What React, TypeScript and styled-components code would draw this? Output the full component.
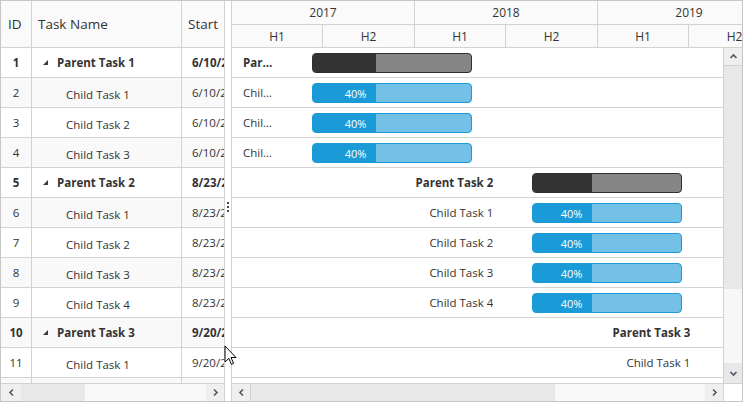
import React from 'react';
import styled, { createGlobalStyle } from 'styled-components';

const GlobalStyle = createGlobalStyle`
  html, body { margin: 0; padding: 0; background: #ffffff; }
  body { font-family: "Open Sans", "Noto Sans", sans-serif; color: #333333; }
`;

const LINE = '#d2d2d2';
const PX_PER_YEAR = 183;
const PX_PER_DAY = PX_PER_YEAR / 365;
const ORIGIN = Date.UTC(2017, 0, 1);
const dayOf = (y: number, m: number, d: number) => (Date.UTC(y, m - 1, d) - ORIGIN) / 86400000;

type Group = { start: string; day: number; duration: number };
type Task = { id: number; name: string; parent: boolean; group: Group; progress: number };

const G1: Group = { start: '6/10/2017', day: dayOf(2017, 6, 10), duration: 319 };
const G2: Group = { start: '8/23/2018', day: dayOf(2018, 8, 23), duration: 299 };
const G3: Group = { start: '9/20/2019', day: dayOf(2019, 9, 20), duration: 300 };

const tasks: Task[] = [
  { id: 1, name: 'Parent Task 1', parent: true, group: G1, progress: 40 },
  { id: 2, name: 'Child Task 1', parent: false, group: G1, progress: 40 },
  { id: 3, name: 'Child Task 2', parent: false, group: G1, progress: 40 },
  { id: 4, name: 'Child Task 3', parent: false, group: G1, progress: 40 },
  { id: 5, name: 'Parent Task 2', parent: true, group: G2, progress: 40 },
  { id: 6, name: 'Child Task 1', parent: false, group: G2, progress: 40 },
  { id: 7, name: 'Child Task 2', parent: false, group: G2, progress: 40 },
  { id: 8, name: 'Child Task 3', parent: false, group: G2, progress: 40 },
  { id: 9, name: 'Child Task 4', parent: false, group: G2, progress: 40 },
  { id: 10, name: 'Parent Task 3', parent: true, group: G3, progress: 40 },
  { id: 11, name: 'Child Task 1', parent: false, group: G3, progress: 40 },
  { id: 12, name: 'Child Task 2', parent: false, group: G3, progress: 40 },
];

const Frame = styled.div`
  position: relative;
  width: 743px;
  height: 402px;
  box-sizing: border-box;
  border: 1px solid #c6c6c6;
  display: flex;
  overflow: hidden;
  background: #ffffff;
`;

const GridPane = styled.div`
  flex: 0 0 223px;
  display: flex;
  flex-direction: column;
  overflow: hidden;
`;

const GridHeader = styled.div`
  display: grid;
  grid-template-columns: 31px 150px 100px;
  height: 47px;
  flex: 0 0 47px;
  box-sizing: border-box;
  border-bottom: 1px solid ${LINE};
  background: #fafafa;
`;

const HeaderCell = styled.div<{ $pad: number }>`
  box-sizing: border-box;
  border-right: 1px solid ${LINE};
  display: flex;
  align-items: center;
  padding-left: ${(p) => p.$pad}px;
  font-size: 13.5px;
  color: #333333;
  white-space: nowrap;
  overflow: hidden;
`;

const GridBody = styled.div`
  flex: 1;
  overflow: hidden;
`;

const GridRow = styled.div<{ $alt: boolean }>`
  display: grid;
  grid-template-columns: 31px 150px 100px;
  height: 30px;
  box-sizing: border-box;
  border-bottom: 1px solid ${LINE};
  background: ${(p) => (p.$alt ? '#f9f9f9' : '#ffffff')};
`;

const Cell = styled.div<{ $bold: boolean; $pad?: number; $center?: boolean; $shift?: number }>`
  box-sizing: border-box;
  border-right: 1px solid ${LINE};
  display: flex;
  align-items: center;
  justify-content: ${(p) => (p.$center ? 'center' : 'flex-start')};
  padding-left: ${(p) => p.$pad ?? 0}px;
  padding-top: ${(p) => p.$shift ?? 0}px;
  font-size: 11.5px;
  font-weight: ${(p) => (p.$bold ? 700 : 400)};
  color: #333333;
  white-space: nowrap;
  overflow: hidden;
`;

const Toggle = styled.svg`
  width: 5px;
  height: 5px;
  margin-right: 9px;
  flex: 0 0 auto;
`;

const HScroll = styled.div`
  flex: 0 0 18px;
  height: 18px;
  box-sizing: border-box;
  border-top: 1px solid ${LINE};
  display: flex;
`;

const ScrollBtn = styled.div<{ $w: number; $edge?: 'left' | 'right' }>`
  flex: 0 0 ${(p) => p.$w}px;
  display: flex;
  align-items: center;
  justify-content: center;
  background: #efefef;
  box-sizing: border-box;
  ${(p) => (p.$edge === 'left' ? `border-left: 1px solid ${LINE};` : '')}
  ${(p) => (p.$edge === 'right' ? `border-right: 1px solid ${LINE};` : '')}
`;

const Thumb = styled.div<{ $w: number }>`
  flex: 0 0 ${(p) => p.$w}px;
  background: #e8e8e8;
`;

const Track = styled.div`
  flex: 1;
  background: #f8f8f8;
`;

const Splitter = styled.div`
  flex: 0 0 8px;
  box-sizing: border-box;
  border-left: 1px solid ${LINE};
  border-right: 1px solid ${LINE};
  display: flex;
  flex-direction: column;
  align-items: center;
  gap: 2px;
  padding-top: 201px;
  background: #ffffff;
`;

const Grip = styled.span`
  width: 2px;
  height: 2px;
  background: #3c4a5b;
`;

const ChartPane = styled.div`
  flex: 1;
  display: flex;
  flex-direction: column;
  overflow: hidden;
`;

const TimelineHeader = styled.div`
  flex: 0 0 47px;
  display: flex;
  flex-direction: column;
  background: #fafafa;
  overflow: hidden;
`;

const TierRow = styled.div<{ $h: number }>`
  flex: 0 0 ${(p) => p.$h}px;
  display: flex;
  box-sizing: border-box;
  border-bottom: 1px solid ${LINE};
`;

const TierCell = styled.div<{ $w: number }>`
  flex: 0 0 ${(p) => p.$w}px;
  box-sizing: border-box;
  border-right: 1px solid ${LINE};
  display: flex;
  align-items: center;
  justify-content: center;
  font-size: 12px;
  color: #333333;
`;

const ChartBody = styled.div`
  flex: 1;
  display: flex;
  overflow: hidden;
`;

const ChartRows = styled.div`
  flex: 1;
  overflow: hidden;
`;

const ChartRow = styled.div`
  position: relative;
  height: 30px;
  box-sizing: border-box;
  border-bottom: 1px solid ${LINE};
`;

const TaskLabel = styled.div<{ $bold: boolean }>`
  position: absolute;
  top: 0;
  left: 11px;
  height: 29px;
  display: flex;
  align-items: center;
  justify-content: flex-end;
  font-size: 11.5px;
  font-weight: ${(p) => (p.$bold ? 700 : 400)};
  color: #333333;
  white-space: nowrap;
  overflow: hidden;
  span {
    overflow: hidden;
    text-overflow: ellipsis;
  }
`;

const Bar = styled.div<{ $parent: boolean }>`
  position: absolute;
  top: 5px;
  height: 20px;
  box-sizing: border-box;
  border: 1px solid ${(p) => (p.$parent ? '#2f2f2f' : '#1a9ad6')};
  border-radius: 4px;
  background: ${(p) => (p.$parent ? '#868686' : '#74c1e7')};
  overflow: hidden;
  display: flex;
`;

const Progress = styled.div<{ $parent: boolean }>`
  height: 100%;
  box-sizing: border-box;
  background: ${(p) => (p.$parent ? '#333333' : '#1a9ad6')};
  display: flex;
  align-items: center;
  justify-content: flex-end;
  padding-right: 10px;
  color: #ffffff;
  font-size: 11px;
  white-space: nowrap;
`;

const VScroll = styled.div`
  flex: 0 0 19px;
  box-sizing: border-box;
  border-left: 1px solid ${LINE};
  display: flex;
  flex-direction: column;
`;

const VBtn = styled.div<{ $h: number; $line?: boolean; $bg: string }>`
  flex: 0 0 ${(p) => p.$h}px;
  display: flex;
  align-items: center;
  justify-content: center;
  background: ${(p) => p.$bg};
  box-sizing: border-box;
  ${(p) => (p.$line ? `border-bottom: 1px solid ${LINE};` : '')}
`;

const VThumb = styled.div`
  flex: 0 0 223px;
  background: #e8e8e8;
`;

const VTrack = styled.div`
  flex: 1;
  background: #f7f7f7;
`;

const Corner = styled.div`
  flex: 0 0 19px;
  box-sizing: border-box;
  border-left: 1px solid ${LINE};
  background: #ffffff;
`;

const ChartScroll = styled.div`
  flex: 1;
  display: flex;
`;

const Cursor = styled.svg`
  position: absolute;
  left: 223px;
  top: 344px;
  width: 13px;
  height: 21px;
  pointer-events: none;
`;

const Chevron: React.FC<{ dir: 'left' | 'right' | 'up' | 'down' }> = ({ dir }) => {
  const rot = { up: 0, right: 90, down: 180, left: 270 }[dir];
  return (
    <svg width="9" height="9" viewBox="0 0 9 9" style={{ transform: `rotate(${rot}deg)` }}>
      <polyline points="1.5,6 4.5,3 7.5,6" fill="none" stroke="#4a5869" strokeWidth="1.6" />
    </svg>
  );
};

const years = ['2017', '2018', '2019'];
const halves = ['H1', 'H2', 'H1', 'H2', 'H1', 'H2'];

export default function App() {
  return (
    <>
      <GlobalStyle />
      <Frame>
        <GridPane>
          <GridHeader>
            <HeaderCell $pad={7}>ID</HeaderCell>
            <HeaderCell $pad={6}>Task Name</HeaderCell>
            <HeaderCell $pad={6}>Start</HeaderCell>
          </GridHeader>
          <GridBody>
            {tasks.map((t) => (
              <GridRow key={t.id} $alt={t.id % 2 === 0}>
                <Cell $bold={t.parent} $center>
                  {t.id}
                </Cell>
                <Cell $bold={t.parent} $pad={t.parent ? 11 : 34} $shift={t.parent ? 0 : 3}>
                  {t.parent && (
                    <Toggle viewBox="0 0 5 5">
                      <polygon points="5,0 5,5 0,5" fill="#3a3a3a" />
                    </Toggle>
                  )}
                  {t.name}
                </Cell>
                <Cell $bold={t.parent} $pad={10}>
                  {t.group.start}
                </Cell>
              </GridRow>
            ))}
          </GridBody>
          <HScroll>
            <ScrollBtn $w={20}>
              <Chevron dir="left" />
            </ScrollBtn>
            <Thumb $w={64} />
            <Track />
            <ScrollBtn $w={18}>
              <Chevron dir="right" />
            </ScrollBtn>
          </HScroll>
        </GridPane>
        <Splitter>
          <Grip />
          <Grip />
          <Grip />
        </Splitter>
        <ChartPane>
          <TimelineHeader>
            <TierRow $h={24}>
              {years.map((y) => (
                <TierCell key={y} $w={183}>
                  {y}
                </TierCell>
              ))}
            </TierRow>
            <TierRow $h={23}>
              {halves.map((h, i) => (
                <TierCell key={i} $w={i % 2 === 0 ? 91 : 92}>
                  {h}
                </TierCell>
              ))}
            </TierRow>
          </TimelineHeader>
          <ChartBody>
            <ChartRows>
              {tasks.map((t) => {
                const left = t.group.day * PX_PER_DAY;
                const width = t.group.duration * PX_PER_DAY;
                const labelWidth = left - 41 - 11 + 2;
                return (
                  <ChartRow key={t.id}>
                    <TaskLabel $bold={t.parent} style={{ width: labelWidth }}>
                      <span>{t.name}</span>
                    </TaskLabel>
                    <Bar $parent={t.parent} style={{ left, width }}>
                      <Progress $parent={t.parent} style={{ width: `${t.progress}%` }}>
                        {t.parent ? '' : `${t.progress}%`}
                      </Progress>
                    </Bar>
                  </ChartRow>
                );
              })}
            </ChartRows>
            <VScroll>
              <VBtn $h={18} $line $bg="#efefef">
                <Chevron dir="up" />
              </VBtn>
              <VThumb />
              <VTrack />
              <VBtn $h={20} $bg="#e8e8e8">
                <Chevron dir="down" />
              </VBtn>
            </VScroll>
          </ChartBody>
          <HScroll>
            <ChartScroll>
              <ScrollBtn $w={19} $edge="right">
                <Chevron dir="left" />
              </ScrollBtn>
              <Thumb $w={304} />
              <Track />
              <ScrollBtn $w={18}>
                <Chevron dir="right" />
              </ScrollBtn>
            </ChartScroll>
            <Corner />
          </HScroll>
        </ChartPane>
        <Cursor viewBox="0 0 13 21">
          <path
            d="M1 1 L1 17 L4.8 13.4 L7.4 19.4 L9.6 18.4 L7 12.5 L12 12.5 Z"
            fill="#ffffff"
            stroke="#000000"
            strokeWidth="1"
            strokeLinejoin="miter"
          />
        </Cursor>
      </Frame>
    </>
  );
}
